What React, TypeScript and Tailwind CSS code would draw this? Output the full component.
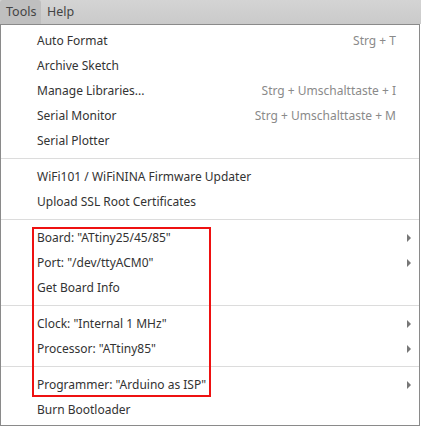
import React from 'react';

type Item = { label: string; shortcut?: string; sub?: boolean } | 'sep';

const items: Item[] = [
  { label: 'Auto Format', shortcut: 'Strg + T' },
  { label: 'Archive Sketch' },
  { label: 'Manage Libraries...', shortcut: 'Strg + Umschalttaste + I' },
  { label: 'Serial Monitor', shortcut: 'Strg + Umschalttaste + M' },
  { label: 'Serial Plotter' },
  'sep',
  { label: 'WiFi101 / WiFiNINA Firmware Updater' },
  { label: 'Upload SSL Root Certificates' },
  'sep',
  { label: 'Board: "ATtiny25/45/85"', sub: true },
  { label: 'Port: "/dev/ttyACM0"', sub: true },
  { label: 'Get Board Info' },
  'sep',
  { label: 'Clock: "Internal 1 MHz"', sub: true },
  { label: 'Processor: "ATtiny85"', sub: true },
  'sep',
  { label: 'Programmer: "Arduino as ISP"', sub: true },
  { label: 'Burn Bootloader' },
];

function Arrow() {
  return (
    <svg width="4" height="8" viewBox="0 0 4 8" className="block">
      <path d="M0 0 L4 4 L0 8 Z" fill="#777" />
    </svg>
  );
}

export default function App() {
  return (
    <div className="w-[421px] h-[426px] bg-white text-[12px] text-[#333] font-['Noto_Sans',sans-serif] overflow-hidden">
      {/* Menu bar */}
      <div className="h-[24px] bg-gradient-to-b from-[#d4d4d4] to-[#cacaca] flex items-end">
        <div className="h-[24px] w-[41px] pl-[6px] bg-[#bfbfbf] rounded-t-[3px] flex items-center text-[#444] text-[12.5px]">Tools</div>
        <div className="h-[24px] pl-[6px] flex items-center text-[#444] text-[12.5px]">Help</div>
      </div>

      {/* Dropdown */}
      <div className="relative w-[420px] h-[402px] border border-[#8a8a8a] bg-white py-[3px]">
        {items.map((it, i) =>
          it === 'sep' ? (
            <div key={i} className="h-[11px] flex items-center">
              <div className="w-full h-px bg-[#dcdcdc]" />
            </div>
          ) : (
            <div key={i} className="h-[25px] flex items-center pl-[36px] pr-[8px]">
              <span className="flex-1">{it.label}</span>
              {it.shortcut && <span className="text-[#8a8a8a] pr-[15px]">{it.shortcut}</span>}
              {it.sub && <Arrow />}
            </div>
          )
        )}
        {/* highlight box */}
        <div className="absolute left-[31px] top-[202px] w-[179px] h-[170px] border-2 border-[#ee1111] pointer-events-none" />
      </div>
    </div>
  );
}
